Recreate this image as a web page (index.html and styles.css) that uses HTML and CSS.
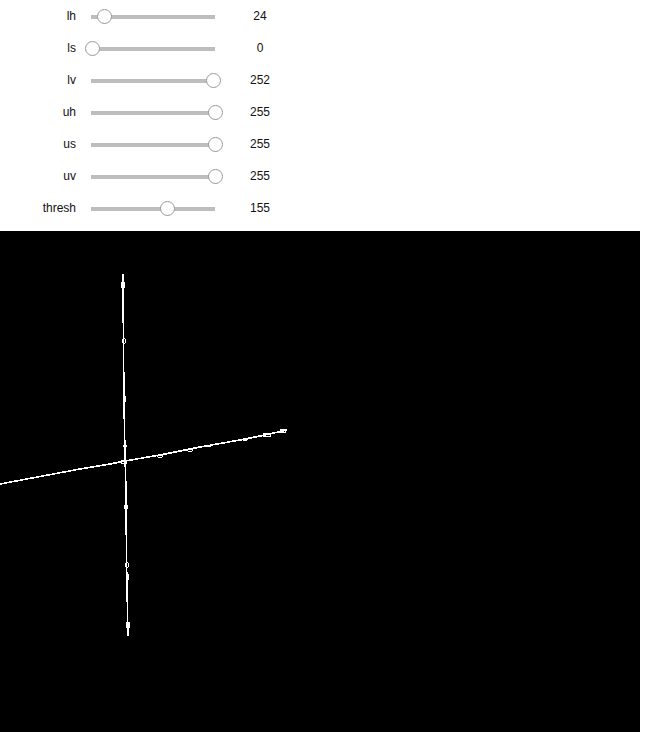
FILE: index.html
```html
<!DOCTYPE html>
<html>
<head>
<meta charset="utf-8">
<link rel="stylesheet" href="styles.css">
</head>
<body>
<div class="panel">
  <div class="row"><span class="label">lh</span><div class="slider"><div class="track"></div><div class="handle" style="left:5.5px"></div></div><span class="value">24</span></div>
  <div class="row"><span class="label">ls</span><div class="slider"><div class="track"></div><div class="handle" style="left:-6px"></div></div><span class="value">0</span></div>
  <div class="row"><span class="label">lv</span><div class="slider"><div class="track"></div><div class="handle" style="left:115px"></div></div><span class="value">252</span></div>
  <div class="row"><span class="label">uh</span><div class="slider"><div class="track"></div><div class="handle" style="left:116.5px"></div></div><span class="value">255</span></div>
  <div class="row"><span class="label">us</span><div class="slider"><div class="track"></div><div class="handle" style="left:116.5px"></div></div><span class="value">255</span></div>
  <div class="row"><span class="label">uv</span><div class="slider"><div class="track"></div><div class="handle" style="left:116.5px"></div></div><span class="value">255</span></div>
  <div class="row"><span class="label">thresh</span><div class="slider"><div class="track"></div><div class="handle" style="left:68.5px"></div></div><span class="value">155</span></div>
</div>
<div class="image">
  <svg class="edges" width="640" height="501" viewBox="0 0 640 501" xmlns="http://www.w3.org/2000/svg">
    <g fill="none" stroke="#fff" stroke-width="1.6" shape-rendering="crispEdges">
      <polyline points="123,43 123.5,120 124,170 125,225 126,260 126.5,330 127.5,380 128,405"/>
      <polyline points="0,253 40,245.5 80,238 110,233 125,230 160,224 200,216 240,209 265,204 287,199"/>
    </g>
    <g fill="none" stroke="#fff" stroke-width="1" shape-rendering="crispEdges">
      <ellipse cx="123" cy="54" rx="1.5" ry="3"/>
      <ellipse cx="124" cy="110" rx="1.2" ry="2.5"/>
      <ellipse cx="124.5" cy="168" rx="1.5" ry="2.5"/>
      <ellipse cx="125" cy="215" rx="1.2" ry="2"/>
      <ellipse cx="124" cy="231" rx="3" ry="2"/>
      <ellipse cx="126" cy="276" rx="1.5" ry="2.5"/>
      <ellipse cx="127" cy="334" rx="1.5" ry="2.5"/>
      <ellipse cx="127.5" cy="346" rx="1" ry="3"/>
      <ellipse cx="128" cy="394" rx="1.5" ry="3"/>
      <ellipse cx="160" cy="225" rx="3" ry="1.2"/>
      <ellipse cx="190" cy="219" rx="3" ry="1.2"/>
      <ellipse cx="208" cy="215" rx="2.5" ry="1"/>
      <ellipse cx="245" cy="208.5" rx="2.5" ry="1"/>
      <ellipse cx="267" cy="204" rx="4" ry="2"/>
      <ellipse cx="283" cy="200" rx="3" ry="2"/>
    </g>
  </svg>
</div>
</body>
</html>
```

FILE: styles.css
```css
html, body {
  margin: 0;
  padding: 0;
  background: #ffffff;
}

body {
  width: 646px;
  font-family: "Liberation Sans", Arial, sans-serif;
  font-size: 12px;
  color: #111111;
}

.panel {
  display: flex;
  flex-direction: column;
  padding-bottom: 7px;
}

.row {
  display: flex;
  align-items: center;
  height: 32px;
}

.label {
  width: 76px;
  text-align: right;
  line-height: 14px;
}

.value {
  width: 90px;
  text-align: center;
  line-height: 14px;
}

.slider {
  position: relative;
  width: 124px;
  height: 32px;
  margin-left: 15px;
}

.track {
  position: absolute;
  left: 0;
  right: 0;
  top: 15px;
  height: 4px;
  background: #bdbdbd;
}

.handle {
  position: absolute;
  top: 9px;
  width: 15px;
  height: 15px;
  box-sizing: border-box;
  border: 1px solid #9a9a9a;
  border-radius: 50%;
  background: #ffffff;
}

.image {
  width: 640px;
  height: 501px;
  background: #000000;
}

.edges {
  display: block;
}
```
